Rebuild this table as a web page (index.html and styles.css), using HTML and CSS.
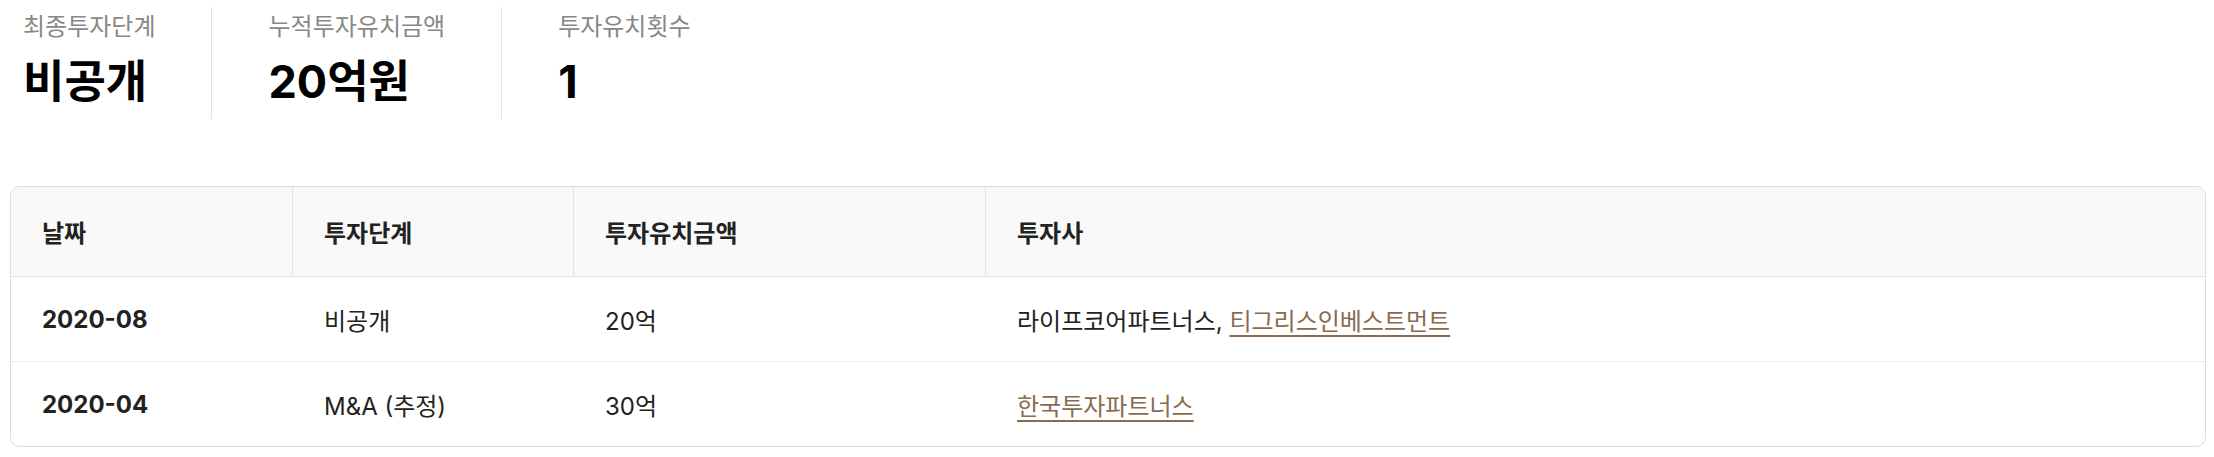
FILE: index.html
```html
<!DOCTYPE html>
<html lang="ko">
<head>
<meta charset="utf-8">
<title>투자 정보</title>
<link rel="stylesheet" href="styles.css">
</head>
<body>
<div class="page">
  <section class="stats">
    <div class="stat">
      <div class="stat-label">최종투자단계</div>
      <div class="stat-value">비공개</div>
    </div>
    <div class="stat">
      <div class="stat-label">누적투자유치금액</div>
      <div class="stat-value">20억원</div>
    </div>
    <div class="stat">
      <div class="stat-label">투자유치횟수</div>
      <div class="stat-value">1</div>
    </div>
  </section>

  <div class="table-wrap">
    <table class="inv-table">
      <thead>
        <tr>
          <th class="col-date">날짜</th>
          <th class="col-stage">투자단계</th>
          <th class="col-amount">투자유치금액</th>
          <th class="col-investor">투자사</th>
        </tr>
      </thead>
      <tbody>
        <tr>
          <td class="date">2020-08</td>
          <td>비공개</td>
          <td>20억</td>
          <td>라이프코어파트너스, <a href="#" class="link">티그리스인베스트먼트</a></td>
        </tr>
        <tr>
          <td class="date">2020-04</td>
          <td>M&amp;A (추정)</td>
          <td>30억</td>
          <td><a href="#" class="link">한국투자파트너스</a></td>
        </tr>
      </tbody>
    </table>
  </div>
</div>
</body>
</html>
```

FILE: styles.css
```css
html, body {
  margin: 0;
  padding: 0;
  background: #ffffff;
}

body {
  font-family: "Inter", "Noto Sans CJK KR", "Noto Sans", sans-serif;
  color: #222222;
}

.page {
  padding: 7px 8px 10px 10px;
}

.stats {
  display: flex;
  padding-left: 13px;
}

.stat {
  padding: 4px 56px 9px 56px;
  border-left: 1px solid #e3e3e3;
  display: flex;
  flex-direction: column;
}

.stat:first-child {
  padding-left: 0;
  border-left: none;
}

.stat-label {
  font-size: 24px;
  line-height: 32px;
  color: #888888;
  white-space: nowrap;
}

.stat-value {
  margin-top: 11px;
  font-size: 45px;
  line-height: 56px;
  font-weight: 700;
  color: #000000;
  white-space: nowrap;
}

.table-wrap {
  margin-top: 67px;
  border: 1px solid #dcdcdc;
  border-radius: 10px;
  overflow: hidden;
}

.inv-table {
  width: 100%;
  border-collapse: separate;
  border-spacing: 0;
  table-layout: fixed;
}

.inv-table th,
.inv-table td {
  box-sizing: border-box;
  text-align: left;
  padding: 0 0 0 31px;
  font-size: 24px;
  white-space: nowrap;
}

.inv-table th {
  height: 90px;
  background: #f9f9f9;
  font-weight: 700;
  color: #222222;
  border-bottom: 1px solid #e0e0e0;
  border-right: 1px solid #e3e3e3;
}

.inv-table th:last-child {
  border-right: none;
}

.col-date { width: 282px; }
.col-stage { width: 281px; }
.col-amount { width: 412px; }

.inv-table td {
  height: 85px;
  color: #222222;
  border-bottom: 1px solid #ececec;
}

.inv-table tbody tr:last-child td {
  border-bottom: none;
  height: 84px;
}

.inv-table td.date {
  font-weight: 700;
}

.link {
  color: #8b6b4f;
  text-decoration: underline;
  text-decoration-thickness: 2px;
  text-underline-offset: 5px;
}
```
